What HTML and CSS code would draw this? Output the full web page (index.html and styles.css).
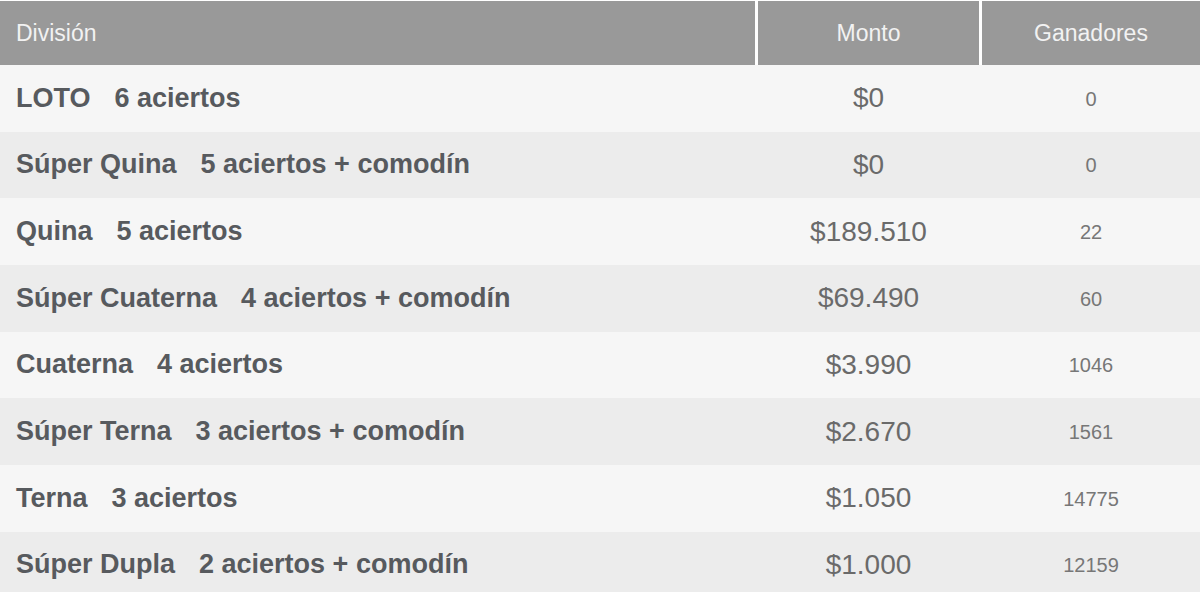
FILE: index.html
```html
<!DOCTYPE html>
<html lang="es">
<head>
<meta charset="utf-8">
<title>Resultados</title>
<link rel="stylesheet" href="styles.css">
</head>
<body>
<div class="table">
  <div class="head">
    <div class="hcell hdiv">División</div>
    <div class="hcell hnum">Monto</div>
    <div class="hcell hnum">Ganadores</div>
  </div>
  <div class="row odd">
    <div class="cell div"><span class="name">LOTO</span><span>6 aciertos</span></div>
    <div class="cell monto">$0</div>
    <div class="cell gan">0</div>
  </div>
  <div class="row even">
    <div class="cell div"><span class="name">Súper Quina</span><span>5 aciertos + comodín</span></div>
    <div class="cell monto">$0</div>
    <div class="cell gan">0</div>
  </div>
  <div class="row odd">
    <div class="cell div"><span class="name">Quina</span><span>5 aciertos</span></div>
    <div class="cell monto">$189.510</div>
    <div class="cell gan">22</div>
  </div>
  <div class="row even">
    <div class="cell div"><span class="name">Súper Cuaterna</span><span>4 aciertos + comodín</span></div>
    <div class="cell monto">$69.490</div>
    <div class="cell gan">60</div>
  </div>
  <div class="row odd">
    <div class="cell div"><span class="name">Cuaterna</span><span>4 aciertos</span></div>
    <div class="cell monto">$3.990</div>
    <div class="cell gan">1046</div>
  </div>
  <div class="row even">
    <div class="cell div"><span class="name">Súper Terna</span><span>3 aciertos + comodín</span></div>
    <div class="cell monto">$2.670</div>
    <div class="cell gan">1561</div>
  </div>
  <div class="row odd">
    <div class="cell div"><span class="name">Terna</span><span>3 aciertos</span></div>
    <div class="cell monto">$1.050</div>
    <div class="cell gan">14775</div>
  </div>
  <div class="row even">
    <div class="cell div"><span class="name">Súper Dupla</span><span>2 aciertos + comodín</span></div>
    <div class="cell monto">$1.000</div>
    <div class="cell gan">12159</div>
  </div>
</div>
</body>
</html>
```
FILE: styles.css
```css
html, body {
  margin: 0;
  padding: 0;
  background: #ffffff;
}
body {
  font-family: "Liberation Sans", Arial, sans-serif;
}
.table {
  width: 1200px;
  padding-top: 1px;
  background: #ffffff;
}
.head,
.row {
  display: grid;
  grid-template-columns: 755px 221px 218px;
  column-gap: 3px;
}
.head {
  height: 64px;
}
.hcell {
  background: #999999;
  color: #f2f2f2;
  font-size: 23px;
  display: flex;
  align-items: center;
}
.hdiv {
  padding-left: 16px;
}
.hnum {
  justify-content: center;
}
.row {
  height: 66.67px;
}
.odd {
  background: #f6f6f6;
}
.even {
  background: #ececec;
}
.cell {
  display: flex;
  align-items: center;
}
.div {
  padding-left: 16px;
  font-weight: bold;
  font-size: 27px;
  color: #575a5e;
}
.name {
  margin-right: 24px;
}
.monto {
  justify-content: center;
  font-size: 28px;
  color: #6a6a6a;
}
.gan {
  justify-content: center;
  font-size: 20px;
  color: #777777;
  padding-top: 2px;
}
```
